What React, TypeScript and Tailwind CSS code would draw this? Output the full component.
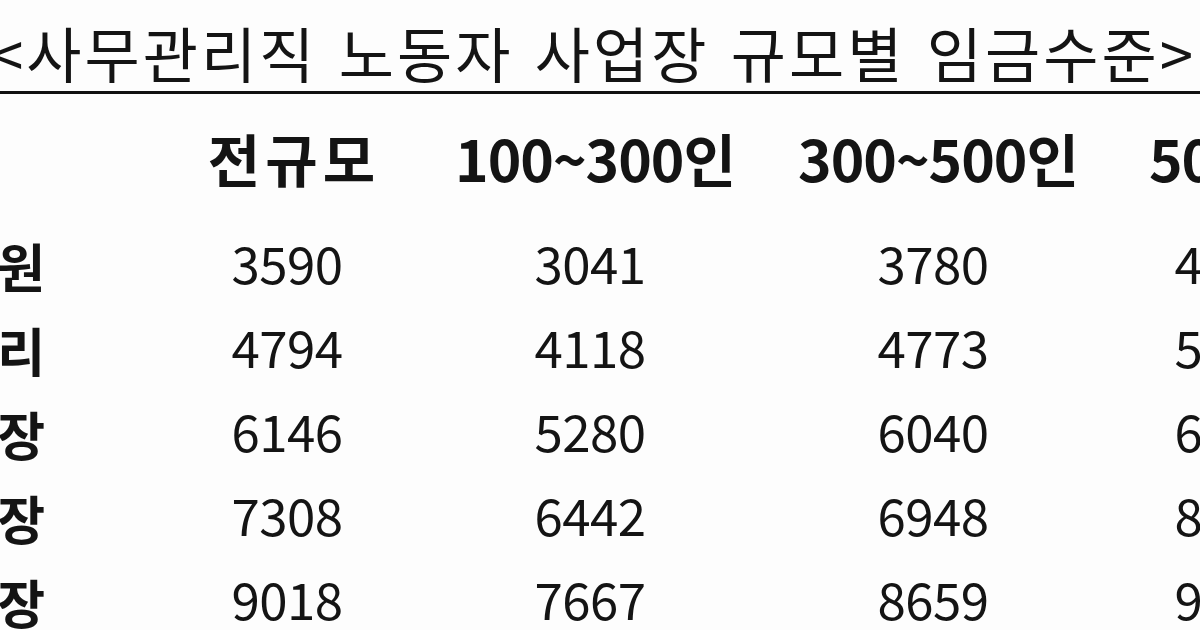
const columns = [
  { text: "전규모", cls: "pl-[14px] tracking-[5px]" },
  { text: "100~300인", cls: "pl-[10px] tracking-[-1px]" },
  { text: "300~500인", cls: "pl-[10px] tracking-[-1px]" },
  { text: "500인 이상", cls: "pl-[66px] tracking-[-1px]" },
];

const rows: { label: string; values: string[] }[] = [
  { label: "사원", values: ["3590", "3041", "3780", "4315"] },
  { label: "대리", values: ["4794", "4118", "4773", "5198"] },
  { label: "과장", values: ["6146", "5280", "6040", "6583"] },
  { label: "차장", values: ["7308", "6442", "6948", "8024"] },
  { label: "부장", values: ["9018", "7667", "8659", "9476"] },
];

const font = { fontFamily: '"Noto Sans CJK KR", "Noto Sans", sans-serif' };

export default function App() {
  return (
    <div
      className="relative h-[630px] w-[1200px] overflow-hidden bg-[#fdfdfd] text-[#141414]"
      style={font}
    >
      {/* Title with underline */}
      <div className="flex h-[94px] items-end border-b-[3px] border-[#111]">
        <div className="ml-[-10px] flex h-[91px] items-center whitespace-nowrap pt-[12px] text-[60px] leading-none tracking-[3px] [word-spacing:5px]">
          &lt;사무관리직 노동자 사업장 규모별 임금수준&gt;
        </div>
      </div>

      {/* Table */}
      <div className="ml-[-60px] grid w-[1400px] grid-cols-[105px_484px_122px_564px_30px]">
        {/* header row */}
        <div className="h-[131px]" />
        {columns.map((c) => (
          <div
            key={c.text}
            className={`flex h-[131px] items-center justify-center whitespace-nowrap pb-[4px] text-[57px] font-bold leading-none ${c.cls}`}
          >
            {c.text}
          </div>
        ))}

        {rows.map((r) => (
          <Row key={r.label} label={r.label} values={r.values} />
        ))}
      </div>
    </div>
  );
}

function Row({ label, values }: { label: string; values: string[] }) {
  return (
    <>
      <div className="flex h-[84px] items-center justify-end whitespace-nowrap pb-[2px] text-[52px] font-bold leading-none">
        {label}
      </div>
      {values.map((v, i) => (
        <div
          key={i}
          className="flex h-[84px] items-center justify-center whitespace-nowrap pb-[10px] text-[51px] leading-none tracking-[-0.5px]"
        >
          {v}
        </div>
      ))}
    </>
  );
}
